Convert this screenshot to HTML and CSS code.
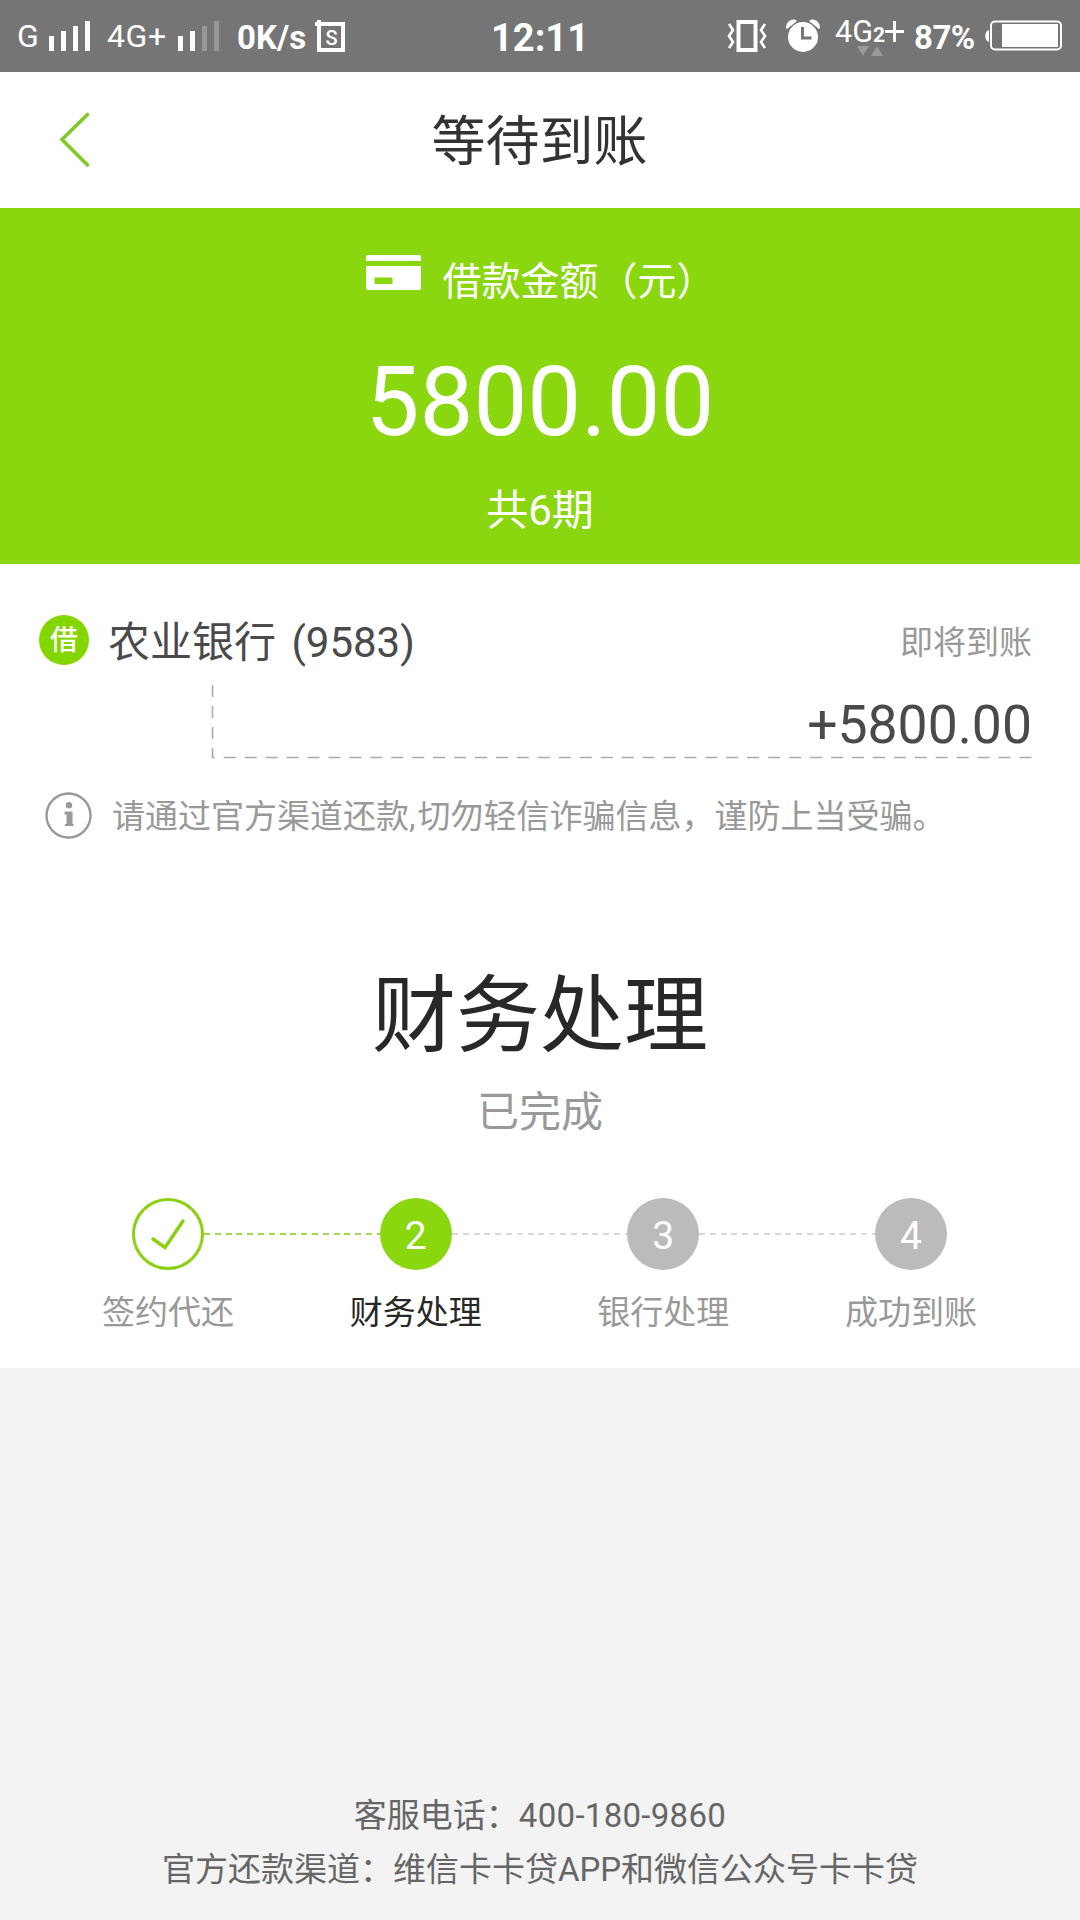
FILE: index.html
```html
<!DOCTYPE html>
<html lang="zh-CN">
<head>
<meta charset="utf-8">
<title>等待到账</title>
<link rel="stylesheet" href="styles.css">
</head>
<body>
<div class="screen">
  <div class="status">
    <div class="status-left">
      <span class="net net-g">G</span>
      <svg class="bars-full" width="42" height="30" viewBox="0 0 42 30" fill="#fff"><path d="M0 15h5v15H0zM12 10h5v20h-5zM24 5h5v25h-5zM36 0h5v30h-5z"/></svg>
      <span class="net net-4g">4G+</span>
      <svg class="bars-weak" width="42" height="30" viewBox="0 0 42 30" fill="#fff"><path d="M0 15h5v15H0zM12 10h5v20h-5z"/><path fill="#979797" d="M24 5h5v25h-5zM36 0h5v30h-5z"/></svg>
      <span class="speed">0K/s</span>
      <svg class="sim" width="30" height="32" viewBox="0 0 30 32"><path fill="none" stroke="#fff" stroke-width="4" d="M0 4H28V30H4V0"/><text x="16.500" y="24.500" text-anchor="middle" class="sim-text">S</text></svg>
    </div>
    <span class="clock">12:11</span>
    <div class="status-right">
      <svg class="vibrate" width="38" height="32" viewBox="0 0 38 32" fill="none" stroke="#fff"><path stroke-width="4" d="M10.500 2h17v28h-17z"/><path stroke-width="2.600" d="M1 4l4 6-4 6 4 6-4 6M37 4l-4 6 4 6-4 6 4 6"/></svg>
      <svg class="alarm" width="34" height="33" viewBox="0 0 34 33"><path fill="#fff" d="M0 9C0 3 6-2 11 2L1 10zM34 9C34 3 28-2 23 2l10 8z"/><circle cx="17" cy="18" r="15" fill="#fff"/><path d="M16.500 8v11h9" fill="none" stroke="#757575" stroke-width="3"/></svg>
      <svg class="lte" width="70" height="38" viewBox="0 0 70 38" fill="#fff"><text x="0" y="23" textLength="38" lengthAdjust="spacingAndGlyphs" class="lte-text">4G</text><text x="38" y="23" class="lte-sub">2</text><path d="M50 11h8V2h3v9h8v3h-8v9h-3v-9h-8z"/><path fill="#999" d="M22 27h12l-6 10zM36 37h12l-6-10z"/></svg>
      <span class="percent">87%</span>
      <svg class="battery" width="77" height="32" viewBox="0 0 77 32"><path fill="#fff" d="M4 10v12C-1 21-1 11 4 10zM17 4h56v23H17z"/><rect x="6" y="1.500" width="70" height="28" rx="4" fill="none" stroke="#fff" stroke-width="2"/></svg>
    </div>
  </div>

  <header class="header">
    <svg class="back" width="30" height="54" viewBox="0 0 30 54"><path d="M28.500 1.500L3 26.500l25.500 25.500" fill="none" stroke="#80ca28" stroke-width="3.600" stroke-linecap="round"/></svg>
    <h1 class="title">等待到账</h1>
  </header>

  <section class="amount">
    <div class="amount-label">
      <svg class="card-icon" width="55" height="35" viewBox="0 0 55 35" fill="#fff"><path d="M2 0h51q2 0 2 2v4H0V2q0-2 2-2z"/><path fill-rule="evenodd" d="M0 11h55v22q0 2-2 2H2q-2 0-2-2zM8.500 22.500v6.500h18v-6.500z"/></svg>
      <span>借款金额（元）</span>
    </div>
    <div class="amount-value">5800.00</div>
    <div class="amount-terms">共6期</div>
  </section>

  <section class="bank">
    <div class="bank-row">
      <span class="badge">借</span>
      <span class="bank-name">农业银行 (9583)</span>
      <span class="bank-state">即将到账</span>
    </div>
    <div class="bank-sum">
      <svg class="connector" width="821" height="74" viewBox="0 0 821 74"><path d="M1.500 0V72.500H821" fill="none" stroke="#aaa" stroke-width="1.600" stroke-dasharray="12 8.940"/></svg>
      <span class="sum">+5800.00</span>
    </div>
    <div class="notice">
      <svg width="47" height="47" viewBox="0 0 47 47"><circle cx="23.500" cy="23.500" r="22" fill="none" stroke="#999" stroke-width="2.400"/><circle cx="24" cy="13.300" r="3.200" fill="#999"/><path fill="#999" d="M19.500 19.500h8v12.500h1v2h-8.500v-2h1.500v-9.500h-2z"/></svg>
      <span>请通过官方渠道还款<span class="comma">,</span>切勿轻信诈骗信息，谨防上当受骗。</span>
    </div>
  </section>

  <section class="progress">
    <h2 class="stage">财务处理</h2>
    <p class="stage-state">已完成</p>
    <ol class="steps">
      <li class="step step-done">
        <span class="dot"><svg width="34" height="31" viewBox="0 0 34 31"><path d="M2 20l12 8.500L32 2" fill="none" stroke="#8bd011" stroke-width="3.400" stroke-linecap="round"/></svg></span>
        <span class="step-name">签约代还</span>
      </li>
      <li class="step step-current"><span class="dot">2</span><span class="step-name">财务处理</span></li>
      <li class="step"><span class="dot">3</span><span class="step-name">银行处理</span></li>
      <li class="step"><span class="dot">4</span><span class="step-name">成功到账</span></li>
    </ol>
  </section>

  <footer class="footer">
    <p>客服电话：<span class="phone">400-180-9860</span></p>
    <p>官方还款渠道：维信卡卡贷APP和微信公众号卡卡贷</p>
  </footer>
</div>
</body>
</html>
```
FILE: styles.css
```css
* { box-sizing: border-box; margin: 0; padding: 0; }

body {
  background: #f3f3f3;
  font-family: Roboto, "Noto Sans CJK SC", sans-serif;
  color: #4a4a4a;
}

svg { display: block; flex: none; overflow: visible; }

.screen {
  display: flex;
  flex-direction: column;
  width: 1080px;
  height: 1920px;
  overflow: hidden;
}

/* Status bar */
.status {
  display: grid;
  grid-template-columns: 1fr auto 1fr;
  height: 72px;
  background: #757575;
  color: #fff;
  white-space: nowrap;
}
.status-left, .status-right { display: flex; align-items: flex-start; }
.status-left { padding-left: 17px; }
.status-right { justify-content: flex-end; padding-right: 18px; }
.net { font-size: 32px; line-height: 40px; margin-top: 16px; }
.net-g { width: 32px; }
.net-4g { width: 70px; letter-spacing: 0.6px; }
.bars-full { margin: 21px 16px 0 0; }
.bars-weak { margin: 21px 17px 0 1px; }
.speed { width: 78px; font-size: 33px; font-weight: 700; line-height: 40px; margin-top: 18px; }
.sim { margin-top: 20px; }
.sim-text { font-size: 20px; font-weight: 500; fill: #fff; }
.clock { font-size: 38px; font-weight: 700; line-height: 44px; margin-top: 16px; }
.vibrate { margin: 20px 20px 0 0; }
.alarm { margin: 19px 15px 0 0; }
.lte { margin: 19px 9px 0 0; }
.lte-text { font-size: 32px; }
.lte-sub { font-size: 21px; font-weight: 700; }
.percent { width: 71px; font-size: 33px; font-weight: 700; line-height: 40px; margin-top: 18px; letter-spacing: -0.5px; }
.battery { margin-top: 20px; }

/* Title bar */
.header {
  display: grid;
  grid-template-columns: 1fr auto 1fr;
  align-items: center;
  height: 136px;
  padding: 0 60px 0 59px;
  background: #fff;
}
.title { color: #333; font-size: 54px; font-weight: 400; line-height: 64px; padding-top: 6px; }

/* Loan amount */
.amount {
  display: flex;
  flex-direction: column;
  align-items: center;
  height: 356px;
  padding-top: 44px;
  background: #8ad70f;
  color: #fff;
}
.amount-label { display: flex; gap: 21px; padding-left: 2px; font-size: 39px; line-height: 60px; }
.card-icon { margin-top: 3px; }
.amount-value { margin-top: 30px; font-size: 96px; line-height: 120px; }
.amount-terms { margin-top: 19px; font-size: 42px; line-height: 60px; }

/* Receiving account */
.bank { height: 356px; padding: 46px 48px 0 39px; background: #fff; }
.bank-row { display: flex; align-items: center; height: 60px; }
.badge {
  display: flex;
  align-items: center;
  justify-content: center;
  width: 50px;
  height: 50px;
  border-radius: 50%;
  background: #84d600;
  color: #fff;
  font-size: 28px;
  font-weight: 500;
  line-height: 50px;
  padding-top: 2px;
}
.bank-name { flex: 1; margin-left: 19px; font-size: 42px; line-height: 60px; padding-top: 6px; word-spacing: 5px; }
.bank-state { color: #999; font-size: 33px; line-height: 60px; padding-top: 6px; }
.bank-sum { display: grid; height: 74px; margin: 15px 0 0 172px; }
.connector, .sum { grid-area: 1 / 1; }
.sum { justify-self: end; font-size: 53.500px; line-height: 79px; }
.notice {
  display: flex;
  align-items: center;
  gap: 20px;
  margin: 29px 0 0 6px;
  color: #999;
  font-size: 33px;
  line-height: 50px;
  white-space: nowrap;
}
.notice > span { padding-top: 4px; }
.comma { letter-spacing: 2px; }

/* Progress */
.progress { height: 448px; background: #fff; text-align: center; }
.stage { padding-top: 47px; color: #282828; font-size: 84px; font-weight: 400; line-height: 100px; }
.stage-state { margin-top: 16px; color: #999; font-size: 42px; line-height: 60px; }
.steps {
  display: grid;
  grid-template-columns: repeat(4, 247.6px);
  justify-content: center;
  margin-top: 55px;
  padding-right: 1px;
  list-style: none;
}
.step { position: relative; display: flex; flex-direction: column; align-items: center; }
.dot {
  display: flex;
  align-items: center;
  justify-content: center;
  width: 72px;
  height: 72px;
  border-radius: 50%;
  background: #bbb;
  color: #fff;
  font-size: 39px;
  line-height: 72px;
  padding-top: 3px;
}
.step-done .dot { background: #fff; border: 3px solid #8bd011; padding: 0; }
.step-current .dot { background: #8ad70f; }
.step-name { margin-top: 18px; color: #999; font-size: 33px; line-height: 50px; }
.step-current .step-name { color: #282828; }

/* Dashed link from each dot to the next one */
.step:not(:last-child)::after {
  content: "";
  position: absolute;
  top: 35px;
  left: calc(50% + 36px);
  width: calc(100% - 72px);
  height: 2px;
  background: repeating-linear-gradient(90deg, #d8d8d8 0 6px, transparent 6px 10.8px);
}
.step-done:not(:last-child)::after { background: repeating-linear-gradient(90deg, #a3d94f 0 6px, transparent 6px 10.8px); }

/* Footer */
.footer {
  flex: 1;
  display: flex;
  flex-direction: column;
  justify-content: flex-end;
  align-items: center;
  padding-bottom: 23px;
  background: #f3f3f3;
  color: #666;
  font-size: 33px;
  line-height: 54px;
}
.phone { letter-spacing: 0.3px; }
```
